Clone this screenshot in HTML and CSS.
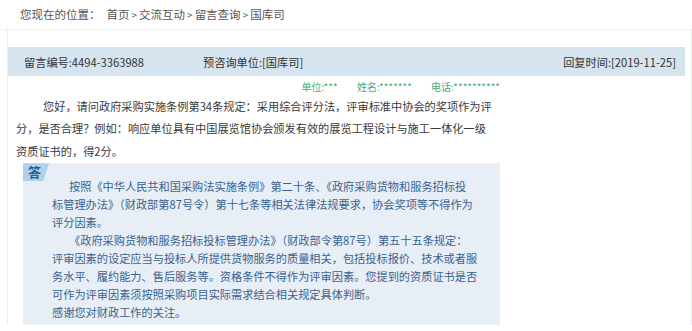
FILE: index.html
```html
<!DOCTYPE html>
<html lang="zh-CN">

<head>
    <meta charset="UTF-8">
    <title>留言查询</title>
    <link rel="stylesheet" href="styles.css">
</head>

<body>
    <div class="crumb">
        您现在的位置：<span class="path">首页<i>&gt;</i>交流互动<i>&gt;</i>留言查询<i>&gt;</i>国库司</span>
    </div>

    <div class="wrap">
        <div class="head">
            <span class="no">留言编号:4494-3363988</span>
            <span class="unit">预咨询单位:[国库司]</span>
            <span class="time">回复时间:[2019-11-25]</span>
        </div>

        <div class="ask">
            <div class="info">
                <span>单位:***</span>
                <span>姓名:*******</span>
                <span>电话:**********</span>
            </div>
            <p class="q">
                您好，请问政府采购实施条例第34条规定：采用综合评分法，评审标准中协会的奖项作为评<br>
                分，是否合理？例如：响应单位具有中国展览馆协会颁发有效的展览工程设计与施工一体化一级<br>
                资质证书的，得2分。
            </p>
        </div>

        <div class="answer">
            <span class="tag">答</span>
            <p class="indent">
                按照《中华人民共和国采购法实施条例》第二十条、《政府采购货物和服务招标投<br>
                标管理办法》（财政部第87号令）第十七条等相关法律法规要求，协会奖项等不得作为<br>
                评分因素。
            </p>
            <p class="indent">
                《政府采购货物和服务招标投标管理办法》（财政部令第87号）第五十五条规定：<br>
                评审因素的设定应当与投标人所提供货物服务的质量相关，包括投标报价、技术或者服<br>
                务水平、履约能力、售后服务等。资格条件不得作为评审因素。您提到的资质证书是否<br>
                可作为评审因素须按照采购项目实际需求结合相关规定具体判断。
            </p>
            <p>感谢您对财政工作的关注。</p>
        </div>
    </div>
</body>

</html>
```

FILE: styles.css
```css
body {
    margin: 0;
    font-family: "Noto Sans CJK SC", "Noto Sans", sans-serif;
    font-size: 11.2px;
    color: #333;
    background: #fff;
}

p {
    margin: 0;
}

.crumb {
    height: 29px;
    line-height: 29px;
    padding-left: 20px;
    font-size: 11.5px;
    color: #555;
    border-bottom: 1px solid #eef0f2;
}

.crumb .path {
    margin-left: 6px;
}

.crumb i {
    font-style: normal;
    font-size: 10px;
    margin: 0 2px;
}

.wrap {
    margin-left: 7px;
    padding-top: 17px;
    border-left: 1px solid #e8eef3;
    border-right: 1px solid #e8eef3;
}

.head {
    display: flex;
    align-items: center;
    height: 29px;
    margin-right: 6px;
    padding: 0 9px 0 16px;
    background: #d6e4f0;
    color: #333;
}

.head .no {
    width: 179px;
}

.head .unit {
    flex: 1;
}

.ask {
    width: 484px;
    margin-left: 8px;
}

.info {
    margin-top: 3px;
    line-height: 16px;
    text-align: right;
    font-size: 10px;
    color: #4fa874;
}

.info span {
    margin-left: 17px;
}

.q {
    line-height: 22.4px;
    text-indent: 27px;
    color: #3a3a3a;
}

.answer {
    position: relative;
    width: 428px;
    margin: 1px 0 0 15px;
    padding: 14px 20px 4px 29px;
    background: #e8eef5;
    line-height: 18px;
    color: #3a6290;
}

.answer .indent {
    text-indent: 17px;
}

.tag {
    position: absolute;
    top: 0;
    left: 0;
    width: 21px;
    height: 18px;
    padding-left: 5px;
    line-height: 18px;
    font-size: 13px;
    font-weight: bold;
    color: #1d5e9c;
    background: #b3d0ea;
    clip-path: polygon(0 0, 100% 0, 78% 100%, 0 100%);
}
```
